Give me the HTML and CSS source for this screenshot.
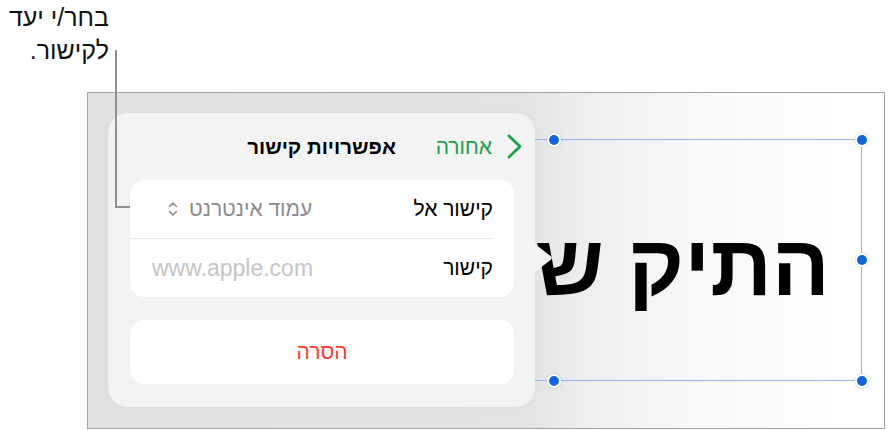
FILE: index.html
```html
<!DOCTYPE html>
<html lang="he">
<head>
<meta charset="utf-8">
<link rel="stylesheet" href="styles.css">
</head>
<body>
<div class="page">
  <div class="callout-text" dir="rtl">בחר/י יעד<br>לקישור.</div>
  <div class="callout-line"></div>
  <div class="frame">
    <div class="selection">
      <div class="big-text" dir="rtl">התיק ש</div>
      <span class="handle h-tl"></span>
      <span class="handle h-tm"></span>
      <span class="handle h-tr"></span>
      <span class="handle h-ml"></span>
      <span class="handle h-mr"></span>
      <span class="handle h-bl"></span>
      <span class="handle h-bm"></span>
      <span class="handle h-br"></span>
    </div>
    <div class="popover" dir="rtl">
      <div class="pop-header">
        <div class="back">
          <svg class="chev" width="15" height="25" viewBox="0 0 15 25"><path d="M2 2 L13 12.5 L2 23" fill="none" stroke="#1d9f4a" stroke-width="2.8" stroke-linecap="round" stroke-linejoin="round"/></svg>
          <span>אחורה</span>
        </div>
        <div class="title">אפשרויות קישור</div>
        <div></div>
      </div>
      <div class="card">
        <div class="row row-type">
          <span class="label">קישור אל</span>
          <span class="value">עמוד אינטרנט<svg class="updown" width="10" height="16" viewBox="0 0 10 16"><path d="M1.5 5.5 L5 2 L8.5 5.5 M1.5 10.5 L5 14 L8.5 10.5" fill="none" stroke="#8e8e93" stroke-width="1.6" stroke-linecap="round" stroke-linejoin="round"/></svg></span>
        </div>
        <div class="sep"></div>
        <div class="row row-link">
          <span class="label">קישור</span>
          <span class="placeholder">www.apple.com</span>
        </div>
      </div>
      <div class="card delete">הסרה</div>
      <svg class="arrow" width="19" height="30" viewBox="0 0 19 30"><path d="M0 1 L15.5 13 Q18 15 15.5 17 L0 29 Z" fill="#f3f3f3"/></svg>
    </div>
  </div>
</div>
</body>
</html>
```
FILE: styles.css
```css
html, body {
  margin: 0;
  padding: 0;
  background: #ffffff;
}
body {
  font-family: "Liberation Sans", "DejaVu Sans", sans-serif;
  color: #000;
}
.page {
  position: relative;
  width: 889px;
  height: 430px;
  overflow: hidden;
}
.callout-text {
  box-sizing: border-box;
  width: 109px;
  height: 92px;
  padding-top: 1px;
  font-size: 25px;
  line-height: 33px;
  text-align: right;
  color: #111;
}
.callout-line {
  position: absolute;
  left: 115px;
  top: 50px;
  width: 15px;
  height: 158px;
  border-left: 2px solid #909090;
  border-bottom: 2px solid #909090;
  box-sizing: border-box;
  z-index: 5;
}
.frame {
  position: relative;
  box-sizing: border-box;
  margin-left: 87px;
  width: 798px;
  height: 337px;
  border: 1px solid #a3a3a3;
  background: linear-gradient(to right, #e1e1e1 0, #e3e3e3 440px, #eeeeee 500px, #f8f8f8 600px, #ffffff 760px);
  overflow: hidden;
}
.selection {
  position: absolute;
  left: 157px;
  top: 46px;
  width: 617px;
  height: 242px;
  box-sizing: border-box;
  border: 1px solid #98b6ee;
  display: flex;
  align-items: center;
  justify-content: flex-start;
  direction: rtl;
}
.big-text {
  padding-right: 31px;
  font-size: 86px;
  font-weight: bold;
  white-space: nowrap;
  line-height: 1;
  margin-top: 10px;
}
.handle {
  position: absolute;
  width: 10px;
  height: 10px;
  border-radius: 50%;
  background: #1466d8;
  border: 2px solid #fff;
  box-shadow: 0 0 2px rgba(0,0,0,0.25);
  margin-left: -7px;
  margin-top: -7px;
}
.h-tl { left: 0; top: 0; }
.h-tm { left: 308px; top: 0; }
.h-tr { left: 616px; top: 0; }
.h-ml { left: 0; top: 120px; }
.h-mr { left: 616px; top: 120px; }
.h-bl { left: 0; top: 241px; }
.h-bm { left: 308px; top: 241px; }
.h-br { left: 616px; top: 241px; }
.popover {
  position: absolute;
  left: 20px;
  top: 20px;
  width: 427px;
  height: 294px;
  box-sizing: border-box;
  background: #f3f3f3;
  border-radius: 20px;
  padding: 0 21px 23px 22px;
  display: flex;
  flex-direction: column;
  z-index: 2;
  box-shadow: 0 0 6px rgba(0,0,0,0.03);
}
.pop-header {
  height: 67px;
  display: grid;
  grid-template-columns: 1fr auto 1fr;
  align-items: center;
  margin: 0 -21px 0 -22px;
}
.back {
  display: flex;
  align-items: center;
  gap: 15px;
  padding-right: 13px;
  color: #1d9f4a;
  font-size: 21px;
}
.chev { display: block; }
.title {
  font-size: 20.5px;
  font-weight: bold;
}
.card {
  background: #ffffff;
  border-radius: 14px;
}
.row {
  height: 58px;
  display: flex;
  align-items: center;
  justify-content: space-between;
  padding-right: 21px;
  font-size: 21px;
}
.row-type { padding-left: 38px; }
.row-link { padding-left: 22px; }
.value {
  color: #8a8a8e;
  display: flex;
  align-items: center;
  gap: 11px;
}
.updown { display: block; }
.placeholder {
  color: #c5c5c7;
  direction: ltr;
  font-size: 23px;
}
.sep {
  height: 1px;
  background: #e6e6e8;
  margin-right: 21px;
}
.delete {
  margin-top: 23px;
  height: 64px;
  display: flex;
  align-items: center;
  justify-content: center;
  color: #ff3b30;
  font-size: 21px;
}
.arrow {
  position: absolute;
  left: 427px;
  top: 130px;
}
```
